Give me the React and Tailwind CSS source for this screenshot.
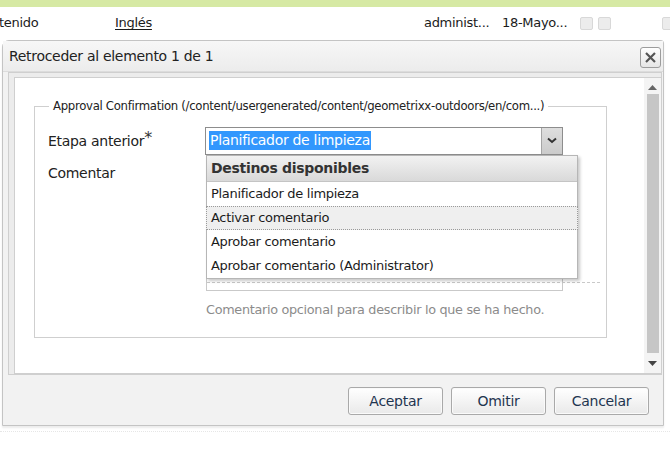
import React from 'react';

// cuadrito gris de la barra superior
const Square = ({ className = '' }) => (
    <span className={`inline-block shrink-0 w-[13px] h-[13px] rounded-[2px] border border-[#d8d8d8] bg-[#ececec] ${className}`} />
);

const Button = ({ children }) => (
    <button className="w-[95px] h-[28px] rounded-[3px] border border-[#a9a9a9] bg-gradient-to-b from-[#ffffff] to-[#e9e9e9] text-[14px] text-[#1f3550] shadow-[inset_0_0_0_1px_#fafafa]">
        {children}
    </button>
);

const options = ['Planificador de limpieza', 'Activar comentario', 'Aprobar comentario', 'Aprobar comentario (Administrator)'];

export default function App() {
    return (
        <div className="w-[670px] h-[452px] bg-white overflow-hidden font-['DejaVu_Sans',sans-serif] text-[13px] text-[#1b1b1b] tracking-[-0.3px]">
            {/* barra verde */}
            <div className="h-[7px] bg-[#d6e9a4]" />

            {/* fila de la tabla de fondo */}
            <div className="h-[32px] flex items-center">
                <span className="ml-[-1px] w-[116px]">tenido</span>
                <span className="underline underline-offset-2">Inglés</span>
                <span className="ml-auto w-[78px]">administ...</span>
                <span className="w-[78px]">18-Mayo...</span>
                <div className="flex items-center gap-[5px] w-[95px] mr-[-5px] shrink-0">
                    <Square />
                    <Square />
                    <Square className="ml-[46px]" />
                </div>
            </div>

            {/* diálogo */}
            <div className="ml-[2px] mt-[1px] w-[662px] h-[386px] border border-[#c4c4c4] rounded-tl-[7px] rounded-tr-[3px] bg-[#f2f2f2] flex flex-col shadow-[0_2px_2px_rgba(0,0,0,0.08)]">
                <div className="h-[31px] flex items-center justify-between pl-[6px] pr-[2px] bg-gradient-to-b from-[#f7f7f7] to-[#ececec] border-b border-[#dcdcdc]">
                    <span className="text-[14px] text-[#222]">Retroceder al elemento 1 de 1</span>
                    <span className="w-[21px] h-[21px] mt-[2px] border border-[#9c9c9c] rounded-[3px] bg-gradient-to-b from-white to-[#e6e6e6] flex items-center justify-center">
                        <svg width="13" height="13" viewBox="0 0 13 13">
                            <path d="M2 2 L11 11 M11 2 L2 11" stroke="#555" strokeWidth="2.2" />
                        </svg>
                    </span>
                </div>

                {/* cuerpo */}
                <div className="ml-[5px] mr-[1px] h-[303px] border border-[#cfcfcf] bg-[#ececec] pl-[5px] pt-[4px] flex">
                    <div className="flex-1 border border-[#cfcfcf] border-r-0 bg-white flex">
                        <div className="flex-1 pl-[19px] pr-[37px] pt-[20px]">
                            <fieldset className="border border-[#cfcfcf] h-[240px] pl-[13px] pr-[10px]">
                                <legend className="px-[4px] ml-[1px] text-[11.7px] text-[#222]">
                                    Approval Confirmation (/content/usergenerated/content/geometrixx-outdoors/en/com...)
                                </legend>

                                <div className="flex items-start mt-[11px]">
                                    <div className="w-[157px] flex flex-col text-[14px] text-[#222]">
                                        <span className="h-[29px] leading-[29px]">Etapa anterior<span className="text-[16px] text-[#333] align-top leading-[22px]">*</span></span>
                                        <span className="mt-[3px] h-[29px] leading-[29px]">Comentar</span>
                                    </div>

                                    <div className="w-[358px] relative">
                                        {/* select */}
                                        <div className="h-[28px] border border-[#8d8d8d] flex bg-white">
                                            <div className="flex-1 flex items-center pl-[3px]">
                                                <span className="bg-[#3297fd] text-white text-[14px] leading-[19px] px-[1px]">Planificador de limpieza</span>
                                            </div>
                                            <div className="w-[21px] border-l border-[#a5a5a5] bg-gradient-to-b from-[#dedede] to-[#cbcbcb] flex items-center justify-center">
                                                <svg width="10" height="7" viewBox="0 0 10 7">
                                                    <path d="M1 1.5 L5 5 L9 1.5" stroke="#333" strokeWidth="2" fill="none" />
                                                </svg>
                                            </div>
                                        </div>

                                        {/* textarea */}
                                        <div className="mt-[1px] h-[135px] w-[357px] ml-[1px] border border-[#c9c9c9] relative">
                                            <div className="absolute left-0 right-[-38px] bottom-[7px] border-t border-dashed border-[#c9c9c9]" />
                                        </div>
                                        <p className="mt-[9px] ml-[1px] text-[12.8px] whitespace-nowrap text-[#8b8b8b]">Comentario opcional para describir lo que se ha hecho.</p>

                                        {/* lista desplegable */}
                                        <div className="absolute left-[1px] top-[28px] w-[372px] bg-white border border-[#b6b6b6] shadow-[2px_2px_3px_rgba(0,0,0,0.22)] text-[13px]">
                                            <div className="h-[26px] flex items-center pl-[4px] text-[14px] font-bold text-[#333] bg-gradient-to-b from-[#f2f2f2] to-[#d9d9d9] border-b border-[#c4c4c4]">
                                                Destinos disponibles
                                            </div>
                                            {options.map((o, i) => (
                                                <div
                                                    key={o}
                                                    className={
                                                        i === 1
                                                            ? 'h-[24px] flex items-center pl-[4px] bg-[#efefef] border border-dotted border-[#9a9a9a] ml-[-1px] mr-[-1px]'
                                                            : 'h-[24px] flex items-center pl-[4px]'
                                                    }
                                                >
                                                    {o}
                                                </div>
                                            ))}
                                        </div>
                                    </div>
                                </div>
                            </fieldset>
                        </div>

                        {/* barra de desplazamiento */}
                        <div className="w-[17px] flex flex-col items-center bg-[#f4f4f4] pt-[6px] pb-[4px]">
                            <svg width="9" height="6" viewBox="0 0 9 6"><path d="M0 6 L4.5 1 L9 6 Z" fill="#666" /></svg>
                            <div className="mt-[4px] w-[12px] flex-1 bg-[#c6c6c6]" />
                            <svg className="mt-[8px] mb-[2px]" width="9" height="6" viewBox="0 0 9 6"><path d="M0 0 L9 0 L4.5 5 Z" fill="#444" /></svg>
                        </div>
                    </div>
                </div>

                {/* pie */}
                <div className="flex-1 flex items-start justify-end gap-[8px] pt-[12px] pr-[14px]">
                    <Button>Aceptar</Button>
                    <Button>Omitir</Button>
                    <Button>Cancelar</Button>
                </div>
            </div>

            <div className="mt-[5px] border-t border-dotted border-[#e6e6e6]" />
        </div>
    );
}
